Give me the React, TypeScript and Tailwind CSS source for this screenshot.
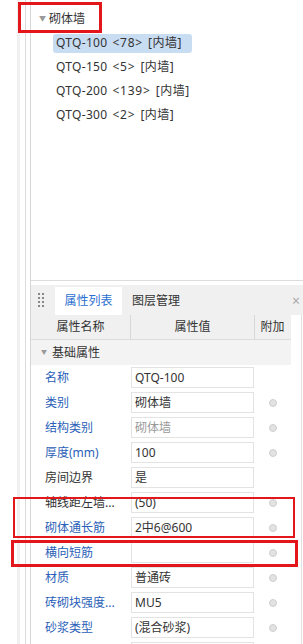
import React from "react";

const items = [
  { code: "QTQ-100", count: "<78>", active: true },
  { code: "QTQ-150", count: "<5>" },
  { code: "QTQ-200", count: "<139>" },
  { code: "QTQ-300", count: "<2>" },
];

const rows = [
  { label: "名称", value: "QTQ-100", blue: true, dot: false },
  { label: "类别", value: "砌体墙", blue: true, dot: true },
  { label: "结构类别", value: "砌体墙", blue: true, dot: true, muted: true },
  { label: "厚度(mm)", value: "100", blue: true, dot: true },
  { label: "房间边界", value: "是", blue: false, dot: false },
  { label: "轴线距左墙...", value: "(50)", blue: false, dot: true },
  { label: "砌体通长筋", value: "2中6@600", blue: true, dot: true },
  { label: "横向短筋", value: "", blue: true, dot: true },
  { label: "材质", value: "普通砖", blue: true, dot: true },
  { label: "砖砌块强度...", value: "MU5", blue: true, dot: true },
  { label: "砂浆类型", value: "(混合砂浆)", blue: true, dot: true },
];

export default function App() {
  return (
    <div
      className="relative w-[303px] h-[644px] overflow-hidden bg-white text-[12px] text-[#333]"
      style={{ fontFamily: '"Noto Sans", "Noto Sans CJK SC", sans-serif' }}
    >
      <div className="flex h-full">
        {/* left gutter */}
        <div className="w-[25px] h-full flex shrink-0">
          <div className="ml-[17px] w-[3px] h-full bg-[#f0f0f0]" />
        </div>
        <div className="w-[5px] h-full border-l border-[#dcdcdc] shrink-0" />

        {/* main column */}
        <div className="flex-1 h-full border-l border-[#d6d6d6] flex flex-col">
          {/* tree */}
          <div className="h-[281px] shrink-0 border-b border-[#dcdcdc] pt-[7px]">
            <div className="flex items-center h-[24px] pl-[8px]">
              <span className="text-[7px] text-[#999] mr-[3px]">▼</span>
              <span>砌体墙</span>
            </div>
            {items.map((it) => (
              <div key={it.code} className="flex items-center h-[24px] pl-[22px]">
                <span
                  className={
                    "h-[19px] flex items-center px-[3px] rounded-[3px] whitespace-nowrap " +
                    (it.active ? "bg-[#c8dcf2] w-[139px]" : "")
                  }
                >
                  <span className="tracking-[0.3px]">{it.code}</span>
                  <span className="ml-[5px] tracking-[0.8px]">{it.count}</span>
                  <span className="ml-[5px] tracking-[0.5px]">[内墙]</span>
                </span>
              </div>
            ))}
          </div>

          <div className="h-[4px] shrink-0" />

          {/* properties panel */}
          <div className="flex flex-col shrink-0">
            <div className="h-[30px] bg-[#f0f0f0] flex items-end relative">
              <div className="absolute left-[7px] top-[8px] grid grid-cols-2 gap-x-[2px] gap-y-[2px]">
                {Array.from({ length: 8 }).map((_, i) => (
                  <div key={i} className="w-[2px] h-[2px] bg-[#888]" />
                ))}
              </div>
              <div className="ml-[24px] w-[67px] h-[28px] bg-white flex items-center justify-center text-[#2a6fd0]">
                属性列表
              </div>
              <div className="ml-[10px] h-[28px] flex items-center text-[#333]">图层管理</div>
              <div className="ml-auto mr-[3px] h-[30px] flex items-center text-[#aaa] text-[14px]">×</div>
            </div>

            <div className="flex">
              <div className="w-[260px]">
                {/* header */}
                <div className="flex h-[25px] bg-[#f0f0f0] border-b border-[#dcdcdc] text-[#333]">
                  <div className="w-[100px] flex items-center justify-center border-r border-[#d8d8d8]">属性名称</div>
                  <div className="w-[124px] flex items-center justify-center border-r border-[#d8d8d8]">属性值</div>
                  <div className="w-[35px] flex items-center justify-center">附加</div>
                </div>
                {/* group */}
                <div className="flex items-center h-[25px] bg-[#f3f3f3] pl-[10px]">
                  <span className="text-[6px] text-[#999] mr-[5px]">▼</span>
                  <span>基础属性</span>
                </div>
                {rows.map((r) => (
                  <div key={r.label} className="flex h-[25px]">
                    <div
                      className={
                        "w-[100px] pl-[14px] flex items-center whitespace-nowrap " +
                        (r.blue ? "text-[#2b5fb8]" : "text-[#333]")
                      }
                    >
                      {r.label}
                    </div>
                    <div className="w-[124px] py-[2px] pr-[1px]">
                      <div
                        className={
                          "h-full border border-[#e3e3e3] flex items-center pl-[3px] " +
                          (r.muted ? "text-[#999]" : "text-[#333]")
                        }
                      >
                        {r.value}
                      </div>
                    </div>
                    <div className="w-[35px] flex items-center justify-center">
                      {r.dot && (
                        <div className="w-[8px] h-[8px] rounded-full bg-[#e2e2e2] border border-[#cfcfcf]" />
                      )}
                    </div>
                  </div>
                ))}
                {/* next row peeking at the bottom edge */}
                <div className="flex h-[25px]">
                  <div className="w-[100px]" />
                  <div className="w-[124px] py-[2px] pr-[1px]">
                    <div className="h-full border border-[#e3e3e3]" />
                  </div>
                </div>
              </div>
              <div className="flex-1 flex justify-end">
                <div className="w-[2px] h-full border-l border-[#e0e0e0]" />
              </div>
            </div>
          </div>
        </div>
      </div>

      {/* red highlight frames */}
      <div className="absolute left-[18px] top-[2px] w-[84px] h-[31px] border-[3px] border-[#e3161b]" />
      <div className="absolute left-[13px] top-[497px] w-[282px] h-[41px] border-2 border-[#e3161b]" />
      <div className="absolute left-[11px] top-[540px] w-[287px] h-[27px] border-[3px] border-[#e3161b]" />
    </div>
  );
}
